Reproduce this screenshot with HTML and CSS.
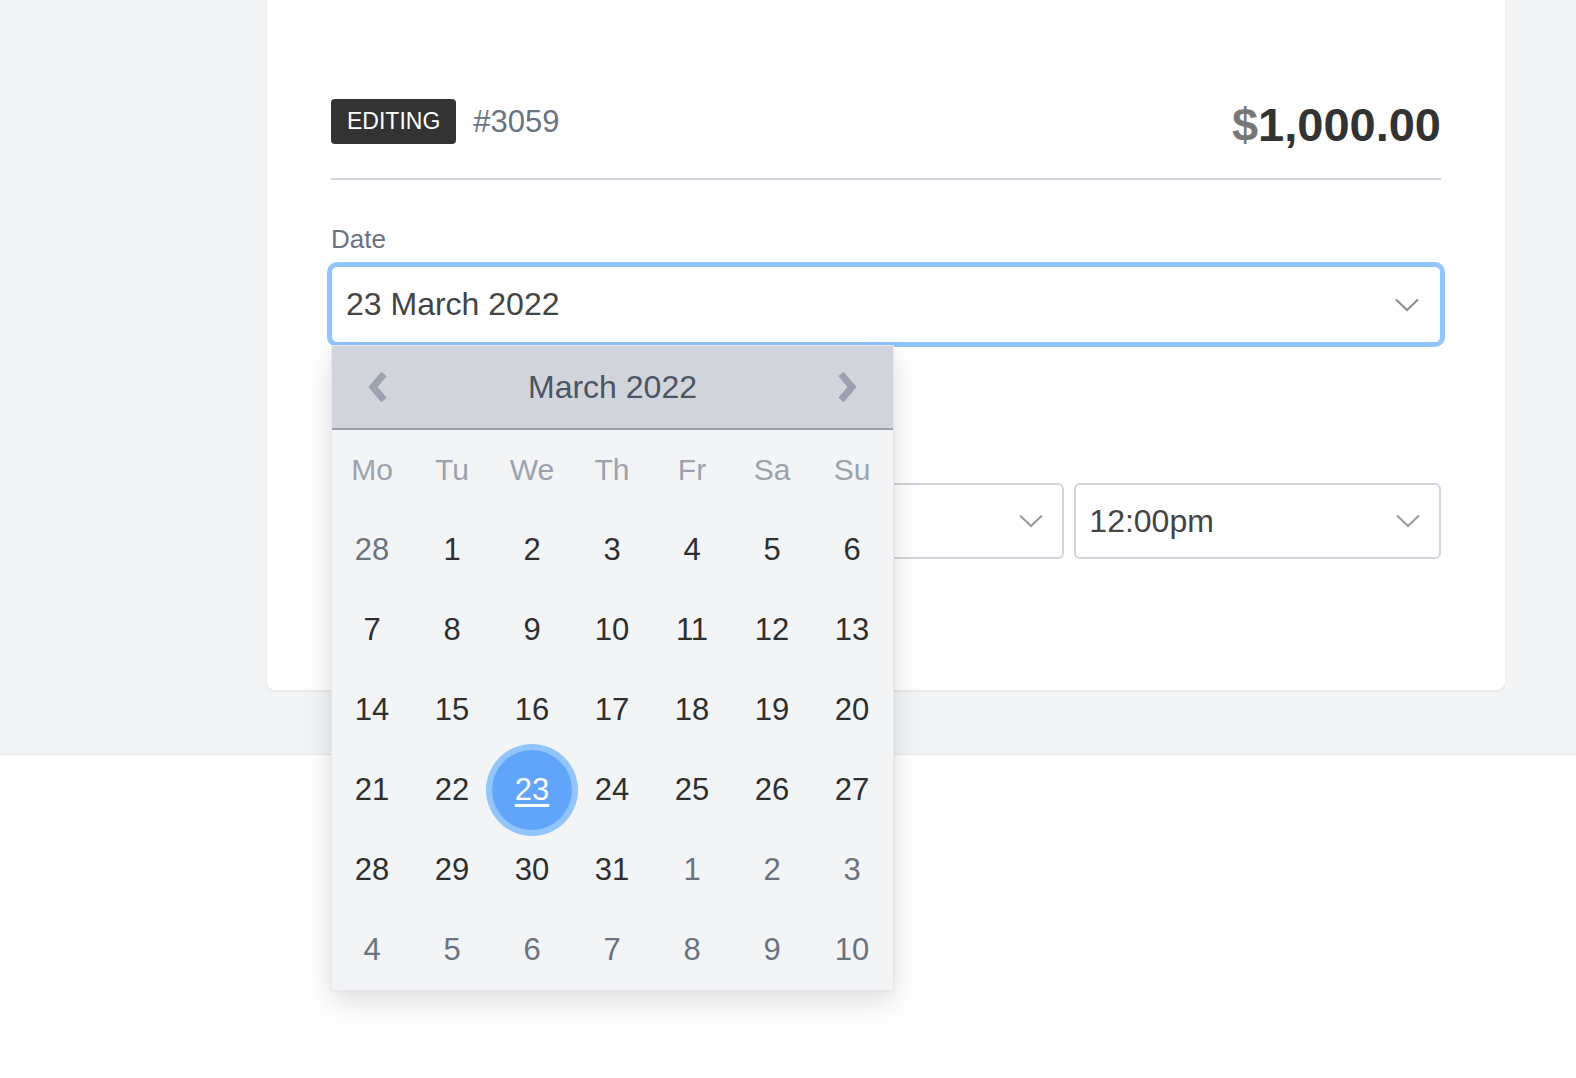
FILE: index.html
```html
<!DOCTYPE html>
<html>
<head>
    <title>Edit payment #3059</title>
    <link rel="stylesheet" href="styles.css">
</head>
<body>
    <div class="page">
        <div class="card">
            <div class="card-header">
                <span class="badge">EDITING</span>
                <span class="ref">#3059</span>
                <span class="amount"><span class="currency">$</span>1,000.00</span>
            </div>

            <div class="field date-field">
                <label class="label">Date</label>
                <div class="input focused">
                    <span>23 March 2022</span>
                    <svg class="caret" width="24" height="14" viewBox="0 0 24 14"><polyline points="1,1.5 12,12 23,1.5" fill="none" stroke="#8e8e8e" stroke-width="2"/></svg>
                </div>

                <div class="datepicker">
                    <div class="dp-head">
                        <button class="dp-nav">
                            <svg width="24" height="32" viewBox="0 0 24 32"><polyline points="17,3 6,16 17,29" fill="none" stroke="#9ca3af" stroke-width="7"/></svg>
                        </button>
                        <span class="dp-title">March 2022</span>
                        <button class="dp-nav">
                            <svg width="24" height="32" viewBox="0 0 24 32"><polyline points="7,3 18,16 7,29" fill="none" stroke="#9ca3af" stroke-width="7"/></svg>
                        </button>
                    </div>
                    <div class="dp-grid">
                        <span class="dow">Mo</span><span class="dow">Tu</span><span class="dow">We</span><span class="dow">Th</span><span class="dow">Fr</span><span class="dow">Sa</span><span class="dow">Su</span>

                        <span class="day muted">28</span><span class="day">1</span><span class="day">2</span><span class="day">3</span><span class="day">4</span><span class="day">5</span><span class="day">6</span>
                        <span class="day">7</span><span class="day">8</span><span class="day">9</span><span class="day">10</span><span class="day">11</span><span class="day">12</span><span class="day">13</span>
                        <span class="day">14</span><span class="day">15</span><span class="day">16</span><span class="day">17</span><span class="day">18</span><span class="day">19</span><span class="day">20</span>
                        <span class="day">21</span><span class="day">22</span><span class="day selected"><u>23</u></span><span class="day">24</span><span class="day">25</span><span class="day">26</span><span class="day">27</span>
                        <span class="day">28</span><span class="day">29</span><span class="day">30</span><span class="day">31</span><span class="day muted">1</span><span class="day muted">2</span><span class="day muted">3</span>
                        <span class="day muted">4</span><span class="day muted">5</span><span class="day muted">6</span><span class="day muted">7</span><span class="day muted">8</span><span class="day muted">9</span><span class="day muted">10</span>
                    </div>
                </div>
            </div>

            <!-- time row sits under the open picker, only its right part shows -->
            <div class="field time-field">
                <div class="label"></div>
                <div class="time-row">
                    <div class="input">
                        <span></span>
                        <svg class="caret" width="24" height="14" viewBox="0 0 24 14"><polyline points="1,1.5 12,12 23,1.5" fill="none" stroke="#9a9a9a" stroke-width="2"/></svg>
                    </div>
                    <div class="input">
                        <span>12:00pm</span>
                        <svg class="caret" width="24" height="14" viewBox="0 0 24 14"><polyline points="1,1.5 12,12 23,1.5" fill="none" stroke="#9a9a9a" stroke-width="2"/></svg>
                    </div>
                </div>
            </div>
        </div>
    </div>
    <div class="below"></div>
</body>
</html>
```
FILE: styles.css
```css
body {
    margin: 0;
    background: #fff;
    font-family: "Liberation Sans", Arial, sans-serif;
    color: #333;
}

.page {
    position: relative;
    z-index: 1;
    background: #f3f4f6;
    border-bottom: 1px solid #e5e7eb;
    padding: 0 0 64px 267px;
}

.below {
    height: 323px;
    background: #fff;
}

.card {
    width: 1238px;
    box-sizing: border-box;
    background: #fff;
    border-radius: 0 0 8px 8px;
    box-shadow: 0 1px 3px rgba(0, 0, 0, 0.08);
    padding: 99px 64px 131px;
}

.card-header {
    display: flex;
    align-items: center;
    height: 45px;
    padding-bottom: 34px;
    border-bottom: 2px solid #d1d5db;
}

.badge {
    background: #333;
    color: #fff;
    font-size: 23px;
    line-height: 27px;
    padding: 9px 16px;
    border-radius: 4px;
}

.ref {
    margin-left: 17px;
    font-size: 31px;
    line-height: 1;
    color: #6b7280;
}

.amount {
    margin-left: auto;
    margin-top: 5px;
    font-size: 47px;
    line-height: 1;
    font-weight: bold;
    color: #333;
}

.currency {
    color: #777;
}

.field {
    position: relative;
}

.date-field {
    margin-top: 46px;
}

.time-field {
    margin-top: 100px;
}

.label {
    display: block;
    height: 26px;
    font-size: 26px;
    line-height: 26px;
    color: #6b7280;
    margin-bottom: 14px;
}

.input {
    display: flex;
    align-items: center;
    justify-content: space-between;
    height: 76px;
    box-sizing: border-box;
    border: 2px solid #d1d5db;
    border-radius: 6px;
    background: #fff;
    padding: 0 19px 0 13px;
    font-size: 32px;
    color: #444;
}

.input.focused {
    height: 77px;
    border: 1px solid #93c5fd;
    box-shadow: 0 0 0 4px #93c5fd;
    padding: 0 21px 0 14px;
}

.time-row {
    display: grid;
    grid-template-columns: 2fr 1fr;
    gap: 10px;
}

.datepicker {
    position: absolute;
    top: 119px;
    left: 0;
    z-index: 2;
    width: 563px;
    box-sizing: border-box;
    border: 1px solid #e5e7eb;
    background: #f3f4f6;
    box-shadow: 0 12px 28px rgba(0, 0, 0, 0.12), 0 0 12px rgba(0, 0, 0, 0.04);
}

.dp-head {
    display: flex;
    align-items: center;
    height: 82px;
    background: #d1d5db;
    border-bottom: 2px solid #9ca3af;
}

.dp-nav {
    width: 94px;
    height: 82px;
    border: none;
    background: none;
    padding: 0;
    display: flex;
    align-items: center;
    justify-content: center;
}

.dp-title {
    flex: 1;
    text-align: center;
    font-size: 32px;
    color: #4b5563;
}

.dp-grid {
    display: grid;
    grid-template-columns: repeat(7, 80px);
    grid-auto-rows: 80px;
}

.dow,
.day {
    display: flex;
    align-items: center;
    justify-content: center;
    font-size: 30px;
}

.day {
    font-size: 31px;
    color: #2f2f2f;
}

.dow {
    color: #9ca3af;
}

.day.muted {
    color: #6b7280;
}

.day.selected {
    border-radius: 50%;
    background: #60a5fa;
    box-shadow: 0 0 0 6px #93c5fd;
    color: #fff;
}

.day.selected u {
    text-decoration-thickness: 3px;
    text-underline-offset: 4px;
}
```
